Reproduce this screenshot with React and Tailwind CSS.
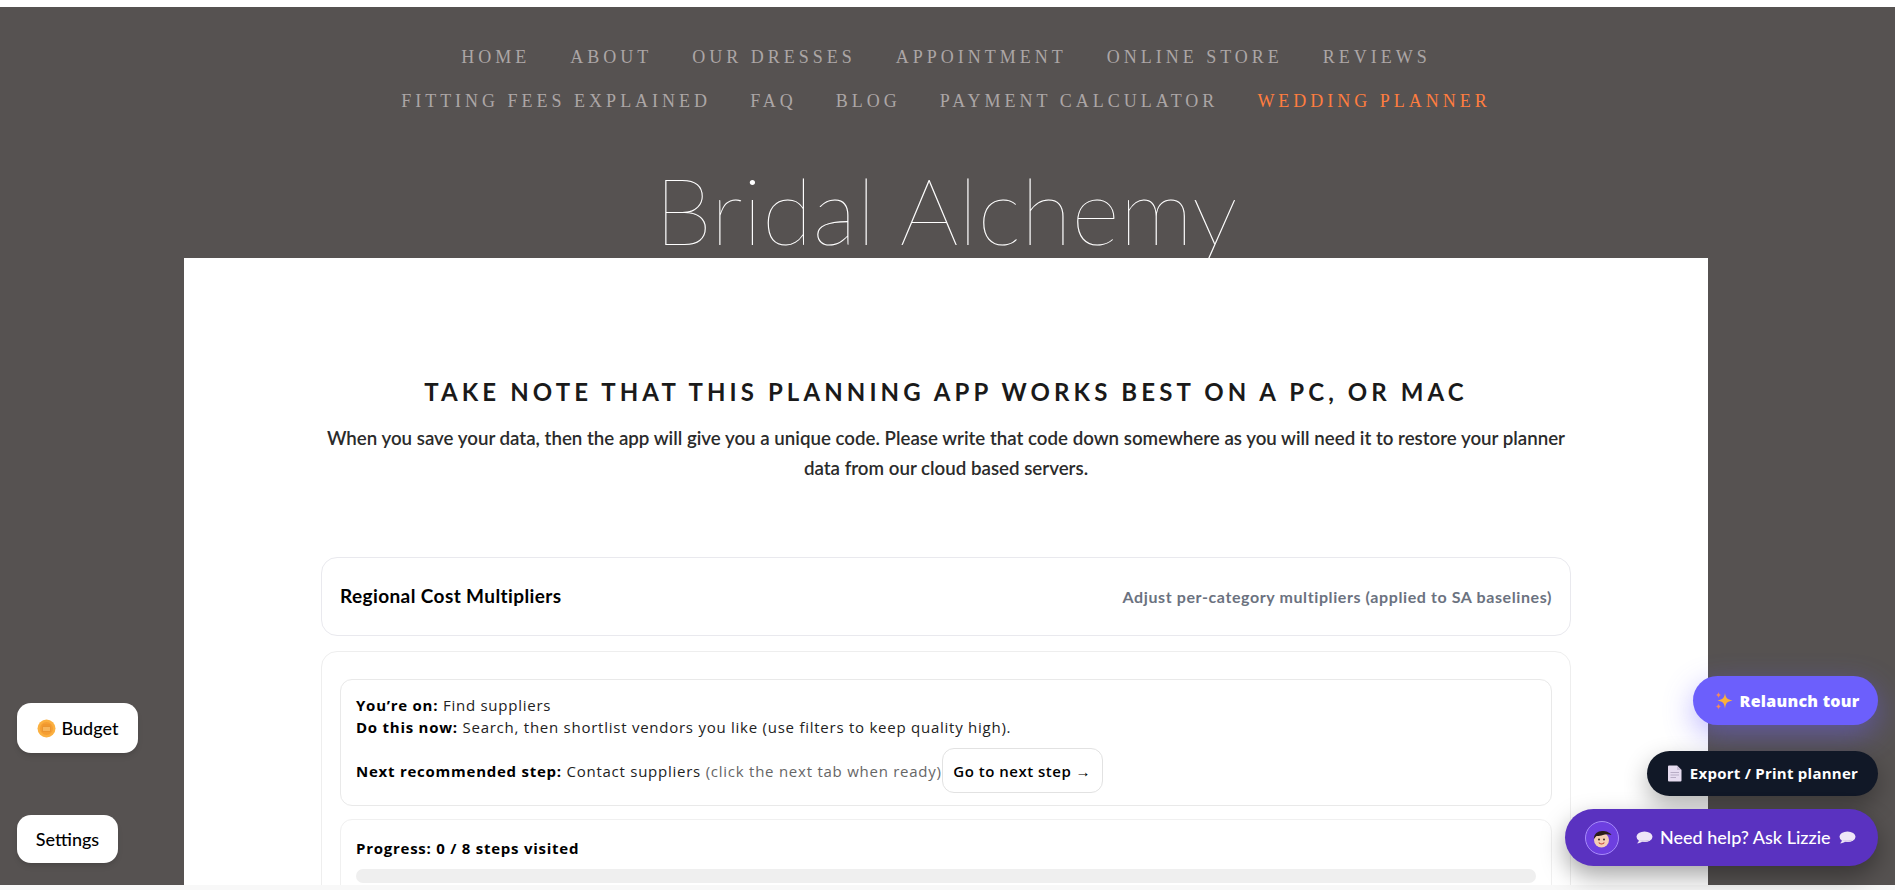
const topLinks = ['HOME', 'ABOUT', 'OUR DRESSES', 'APPOINTMENT', 'ONLINE STORE', 'REVIEWS'];
const bottomLinks = ['FITTING FEES EXPLAINED', 'FAQ', 'BLOG', 'PAYMENT CALCULATOR'];

const NavLink = ({ children, active }) => (
  <a className={active ? 'text-[#ff7d3f]' : 'text-[#aca6a6]'}>{children}</a>
);

const Sparkles = () => (
  <svg width="20" height="20" viewBox="0 0 20 20">
    <path d="M11 2 C11.8 7 13 8.5 18.5 9.5 C13 10.5 11.8 12 11 17.5 C10.2 12 9 10.5 3.5 9.5 C9 8.5 10.2 7 11 2Z" fill="#fbb03b" />
    <path d="M4.5 1 C4.9 3 5.4 3.6 7.5 4 C5.4 4.4 4.9 5 4.5 7 C4.1 5 3.6 4.4 1.5 4 C3.6 3.6 4.1 3 4.5 1Z" fill="#f58a5c" />
    <path d="M4.5 12.5 C4.9 14.5 5.4 15.1 7.5 15.5 C5.4 15.9 4.9 16.5 4.5 18.5 C4.1 16.5 3.6 15.9 1.5 15.5 C3.6 15.1 4.1 14.5 4.5 12.5Z" fill="#f58a5c" />
  </svg>
);

const Page = () => (
  <svg width="15" height="17" viewBox="0 0 15 17">
    <path d="M1 1.5 A1 1 0 0 1 2 .5 H10 L14.5 5 V15.5 A1 1 0 0 1 13.500 16.500 H2 A1 1 0 0 1 1 15.500Z" fill="#e6dcf0" />
    <path d="M10 .5 L14.500 5 H10Z" fill="#c9bdd6" />
    <path d="M3.500 7.500 H12 M3.500 10 H12 M3.500 12.500 H9" stroke="#b8adc6" strokeWidth="1" />
  </svg>
);

const Bubble = () => (
  <svg width="18" height="13" viewBox="0 0 18 13">
    <ellipse cx="9.500" cy="5.800" rx="8" ry="5.300" fill="#efe6f7" />
    <path d="M4 9 C3.800 10.500 3 11.500 1.800 12.300 C4 12.300 6 11.500 7.500 10.500Z" fill="#efe6f7" />
    <path d="M4 9.200 C7 11 12 11 15 8.800 C12 9.600 7 9.800 4 9.200Z" fill="#cdbfe2" />
  </svg>
);

const Coin = () => (
  <svg width="19" height="19" viewBox="0 0 19 19">
    <circle cx="9.500" cy="9.500" r="9" fill="#fbb040" />
    <circle cx="9.500" cy="9.500" r="6.500" fill="#f59e33" />
    <path d="M5.500 7.500 H13.500 V12.500 H5.500Z M5.500 6 H13.500" fill="#f7b55a" stroke="#e98f2a" strokeWidth="0.800" />
  </svg>
);

const Lizzie = () => (
  <div className="flex h-[34px] w-[34px] items-center justify-center rounded-full border border-[#a78bfa] bg-[#6d3fe0]">
    <svg width="24" height="24" viewBox="0 0 24 24">
      <circle cx="11.500" cy="14" r="7.500" fill="#f5cfb4" />
      <path d="M3.800 13 C4 7.500 8 4.800 12.500 5 C16 5 20 6.500 21.500 9 C18 7.800 15 8 13 9 C10 10 8 10.200 6.500 10 C5.500 10.800 4.800 12 3.800 13Z" fill="#2b1d1a" />
      <circle cx="9" cy="13.500" r="0.900" fill="#2b1d1a" />
      <circle cx="14" cy="13.500" r="0.900" fill="#2b1d1a" />
      <path d="M8.800 16.500 C10 18.500 13 18.500 14.300 16.500" fill="none" stroke="#c2413c" strokeWidth="1.100" />
    </svg>
  </div>
);

export default function App() {
  return (
    <div className="relative flex h-[890px] flex-col overflow-hidden bg-white font-['Lato',sans-serif]">
      <div className="h-[7px] shrink-0 bg-white" />
      <div className="min-h-0 flex-1 overflow-hidden bg-[#565251]">
        <div className="w-[1892px]">
          <nav className="pt-[28px] text-center font-['Liberation_Serif',serif] text-[18px] leading-[44px] tracking-[4px]">
            <div className="flex justify-center gap-[40px]">
              {topLinks.map((l) => <NavLink key={l}>{l}</NavLink>)}
            </div>
            <div className="flex justify-center gap-[39px]">
              {bottomLinks.map((l) => <NavLink key={l}>{l}</NavLink>)}
              <NavLink active>WEDDING PLANNER</NavLink>
            </div>
          </nav>

          <div className="mt-[30px] h-[105px] overflow-hidden text-center text-[93px] font-thin leading-[113px] text-white">
            Bridal Alchemy
          </div>

          <main className="mx-auto w-[1524px] bg-white px-[137px] pt-[112px] text-[#222]">
            <h1 className="text-center text-[24px] font-bold leading-[44px] tracking-[4.100px] text-[#1a1a1a]">
              TAKE NOTE THAT THIS PLANNING APP WORKS BEST ON A PC, OR MAC
            </h1>
            <p className="mt-[9px] text-center text-[18.720px] font-semibold leading-[30px] text-[#2b2b2b]">
              When you save your data, then the app will give you a unique code. Please write that code down somewhere as you will need it to restore your planner data from our cloud based servers.
            </p>

            <section className="mt-[74px] flex h-[79px] items-center justify-between rounded-[16px] border border-[#e9e9ee] px-[18px]">
              <span className="text-[19px] font-bold tracking-[0.400px] text-black">Regional Cost Multipliers</span>
              <span className="text-[16px] font-bold tracking-[0.600px] text-[#6b7280]">Adjust per-category multipliers (applied to SA baselines)</span>
            </section>

            <section className="mt-[15px] rounded-[16px] border border-[#eeeeee] p-[18px] pt-[27px] font-['Open_Sans',sans-serif] text-[15px] tracking-[0.750px] text-[#222]">
              <div className="h-[127px] rounded-[12px] border border-[#e9e9e9] px-[15px] pt-[14px] leading-[22px]">
                <div><b className="text-black">You’re on:</b> Find suppliers</div>
                <div><b className="text-black">Do this now:</b> Search, then shortlist vendors you like (use filters to keep quality high).</div>
                <div className="mt-[10px] flex items-center">
                  <span><b className="text-black">Next recommended step:</b> Contact suppliers <span className="text-[#666]">(click the next tab when ready)</span></span>
                  <button type="button" className="h-[45px] w-[161px] rounded-[12px] border border-[#e2e2e2] bg-white text-center font-semibold tracking-[0.500px] text-black">
                    Go to next step →
                  </button>
                </div>
              </div>
              <div className="mt-[13px] h-[100px] rounded-[12px] border border-[#f0f0f0] px-[15px] pt-[17px]">
                <div className="font-bold leading-[22px] text-black">Progress: 0 / 8 steps visited</div>
                <div className="mt-[10px] h-[14px] rounded-full bg-[#efefef]" />
              </div>
            </section>
          </main>
        </div>
      </div>
      <div className="h-[5px] shrink-0 bg-[#f8f8f8]" />

      <button type="button" className="absolute left-[17px] top-[703px] flex h-[50px] w-[121px] items-center justify-center gap-[6px] rounded-[14px] bg-white text-[18px] font-medium text-black shadow-md">
        <Coin />Budget
      </button>
      <button type="button" className="absolute left-[17px] top-[815px] flex h-[48px] w-[101px] items-center justify-center rounded-[14px] bg-white text-[18px] font-medium text-black shadow-md">
        Settings
      </button>

      <div className="absolute right-[17px] top-[676px] flex flex-col items-end font-['Open_Sans',sans-serif]">
        <button type="button" className="flex h-[49px] w-[185px] items-center justify-center gap-[6px] rounded-full bg-[#6c5ffc] pl-[2px] text-[16px] font-extrabold tracking-[0.250px] text-white shadow-[0_10px_30px_rgba(108,95,252,0.45)]">
          <Sparkles />Relaunch tour
        </button>
        <button type="button" className="mt-[26px] flex h-[45px] w-[231px] items-center justify-center gap-[8px] rounded-full bg-[#111827] text-[15px] font-bold tracking-[0.250px] text-white shadow-[0_10px_24px_rgba(0,0,0,0.3)]">
          <Page />Export / Print planner
        </button>
        <button type="button" className="mt-[13px] flex h-[57px] w-[313px] items-center gap-[8px] rounded-full bg-[#5a32c0] pl-[20px] font-['Lato',sans-serif] text-[18px] font-medium text-white shadow-[0_10px_24px_rgba(0,0,0,0.35)]">
          <Lizzie />
          <span className="ml-[8px] flex items-center gap-[7px]"><Bubble />Need help? Ask Lizzie<Bubble /></span>
        </button>
      </div>
    </div>
  );
}
